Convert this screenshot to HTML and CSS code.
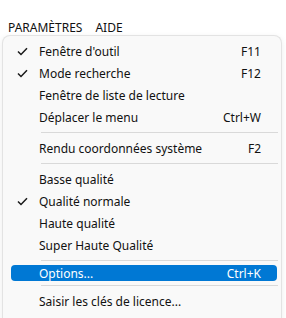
FILE: index.html
```html
<!DOCTYPE html>
<html lang="fr">
<head>
    <meta charset="UTF-8">
    <title>Menu Paramètres</title>
    <link rel="stylesheet" href="styles.css">
</head>
<body>
    <div class="menubar">
        <span class="menubar-item">PARAMÈTRES</span>
        <span class="menubar-item">AIDE</span>
    </div>

    <div class="menu">
        <div class="item"><span class="check"><svg width="11" height="9" viewBox="0 0 11 9"><path d="M1 4.5 L4 7.5 L10 1.2"/></svg></span><span class="label">Fenêtre d'outil</span><span class="key">F11</span></div>
        <div class="item"><span class="check"><svg width="11" height="9" viewBox="0 0 11 9"><path d="M1 4.5 L4 7.5 L10 1.2"/></svg></span><span class="label">Mode recherche</span><span class="key">F12</span></div>
        <div class="item"><span class="check"></span><span class="label">Fenêtre de liste de lecture</span><span class="key"></span></div>
        <div class="item"><span class="check"></span><span class="label">Déplacer le menu</span><span class="key">Ctrl+W</span></div>
        <div class="sep"></div>
        <div class="item"><span class="check"></span><span class="label">Rendu coordonnées système</span><span class="key">F2</span></div>
        <div class="sep"></div>
        <div class="item"><span class="check"></span><span class="label">Basse qualité</span><span class="key"></span></div>
        <div class="item"><span class="check"><svg width="11" height="9" viewBox="0 0 11 9"><path d="M1 4.5 L4 7.5 L10 1.2"/></svg></span><span class="label">Qualité normale</span><span class="key"></span></div>
        <div class="item"><span class="check"></span><span class="label">Haute qualité</span><span class="key"></span></div>
        <div class="item"><span class="check"></span><span class="label">Super Haute Qualité</span><span class="key"></span></div>
        <div class="sep"></div>
        <div class="item active"><span class="check"></span><span class="label">Options...</span><span class="key">Ctrl+K</span></div>
        <div class="sep"></div>
        <div class="item"><span class="check"></span><span class="label">Saisir les clés de licence...</span><span class="key"></span></div>
    </div>
</body>
</html>
```

FILE: styles.css
```css
body {
    margin: 0;
    background: #fff;
    font-family: "Noto Sans", "Open Sans", sans-serif;
    font-size: 12px;
    color: #111;
    overflow: hidden;
}
.menubar {
    display: flex;
    gap: 13px;
    height: 35px;
    align-items: center;
    padding: 19px 8px 0;
    box-sizing: border-box;
}
.menu {
    margin-left: 2px;
    width: 280px;
    box-sizing: border-box;
    background: #f9f9f9;
    border: 1px solid #e3e3e3;
    border-bottom: none;
    border-radius: 8px 8px 0 0;
    padding: 4px 0 10px;
    box-shadow: 0 2px 6px rgba(0, 0, 0, 0.08);
}
.item {
    display: grid;
    grid-template-columns: 28px 1fr auto;
    align-items: center;
    height: 22px;
    margin: 0 4px 0 8px;
    padding: 0 16px 0 0;
    border-radius: 4px;
}
.check {
    display: flex;
    justify-content: center;
    padding-right: 6px;
}
.check path {
    fill: none;
    stroke: #1a1a1a;
    stroke-width: 1.5;
}
.key {
    text-align: right;
}
.active {
    height: 16px;
    margin-top: 3px;
    margin-bottom: 3px;
    background: #0078d4;
    color: #fff;
}
.sep {
    height: 1px;
    background: #d9d9d9;
    margin: 4px 3px 4px 38px;
}
```
